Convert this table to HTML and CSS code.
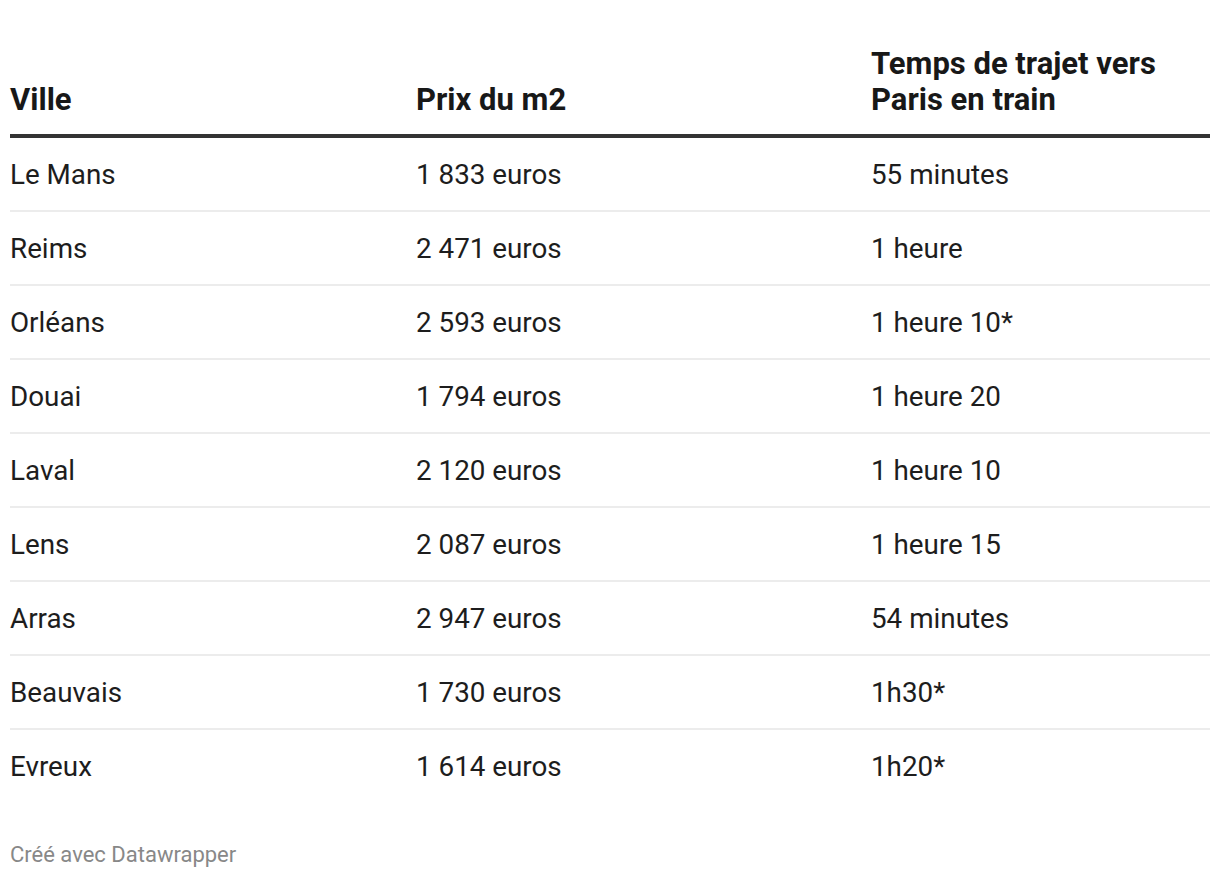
FILE: index.html
```html
<!DOCTYPE html>
<html lang="fr">
<head>
<meta charset="utf-8">
<title>Tableau</title>
<link rel="stylesheet" href="styles.css">
</head>
<body>
<div class="chart">
  <table class="table">
    <thead>
      <tr>
        <th class="c1">Ville</th>
        <th class="c2">Prix du m2</th>
        <th class="c3">Temps de trajet vers<br>Paris en train</th>
      </tr>
    </thead>
    <tbody>
      <tr><td>Le Mans</td><td>1 833 euros</td><td>55 minutes</td></tr>
      <tr><td>Reims</td><td>2 471 euros</td><td>1 heure</td></tr>
      <tr><td>Orléans</td><td>2 593 euros</td><td>1 heure 10*</td></tr>
      <tr><td>Douai</td><td>1 794 euros</td><td>1 heure 20</td></tr>
      <tr><td>Laval</td><td>2 120 euros</td><td>1 heure 10</td></tr>
      <tr><td>Lens</td><td>2 087 euros</td><td>1 heure 15</td></tr>
      <tr><td>Arras</td><td>2 947 euros</td><td>54 minutes</td></tr>
      <tr><td>Beauvais</td><td>1 730 euros</td><td>1h30*</td></tr>
      <tr><td>Evreux</td><td>1 614 euros</td><td>1h20*</td></tr>
    </tbody>
  </table>
  <div class="footer">Créé avec Datawrapper</div>
</div>
</body>
</html>
```

FILE: styles.css
```css
html, body {
  margin: 0;
  padding: 0;
  background: #ffffff;
}
body {
  font-family: Roboto, "Liberation Sans", sans-serif;
  color: #1d1d1d;
}
.chart {
  padding: 46px 10px 0 10px;
}
.table {
  width: 1200px;
  border-collapse: collapse;
  table-layout: fixed;
}
.c1 { width: 406px; }
.c2 { width: 455px; }
.c3 { width: auto; }
th {
  text-align: left;
  vertical-align: bottom;
  font-weight: 700;
  font-size: 31px;
  line-height: 36px;
  padding: 0 0 16px 0;
  border-bottom: 4px solid #333333;
  color: #181818;
}
td {
  font-size: 27.8px;
  line-height: 36px;
  padding: 19px 0 17px 0;
  border-bottom: 2px solid #ececec;
  color: #1d1d1d;
}
tbody tr:last-child td {
  border-bottom: none;
}
.footer {
  margin-top: 38px;
  font-size: 22px;
  line-height: 30px;
  color: #888888;
}
```
